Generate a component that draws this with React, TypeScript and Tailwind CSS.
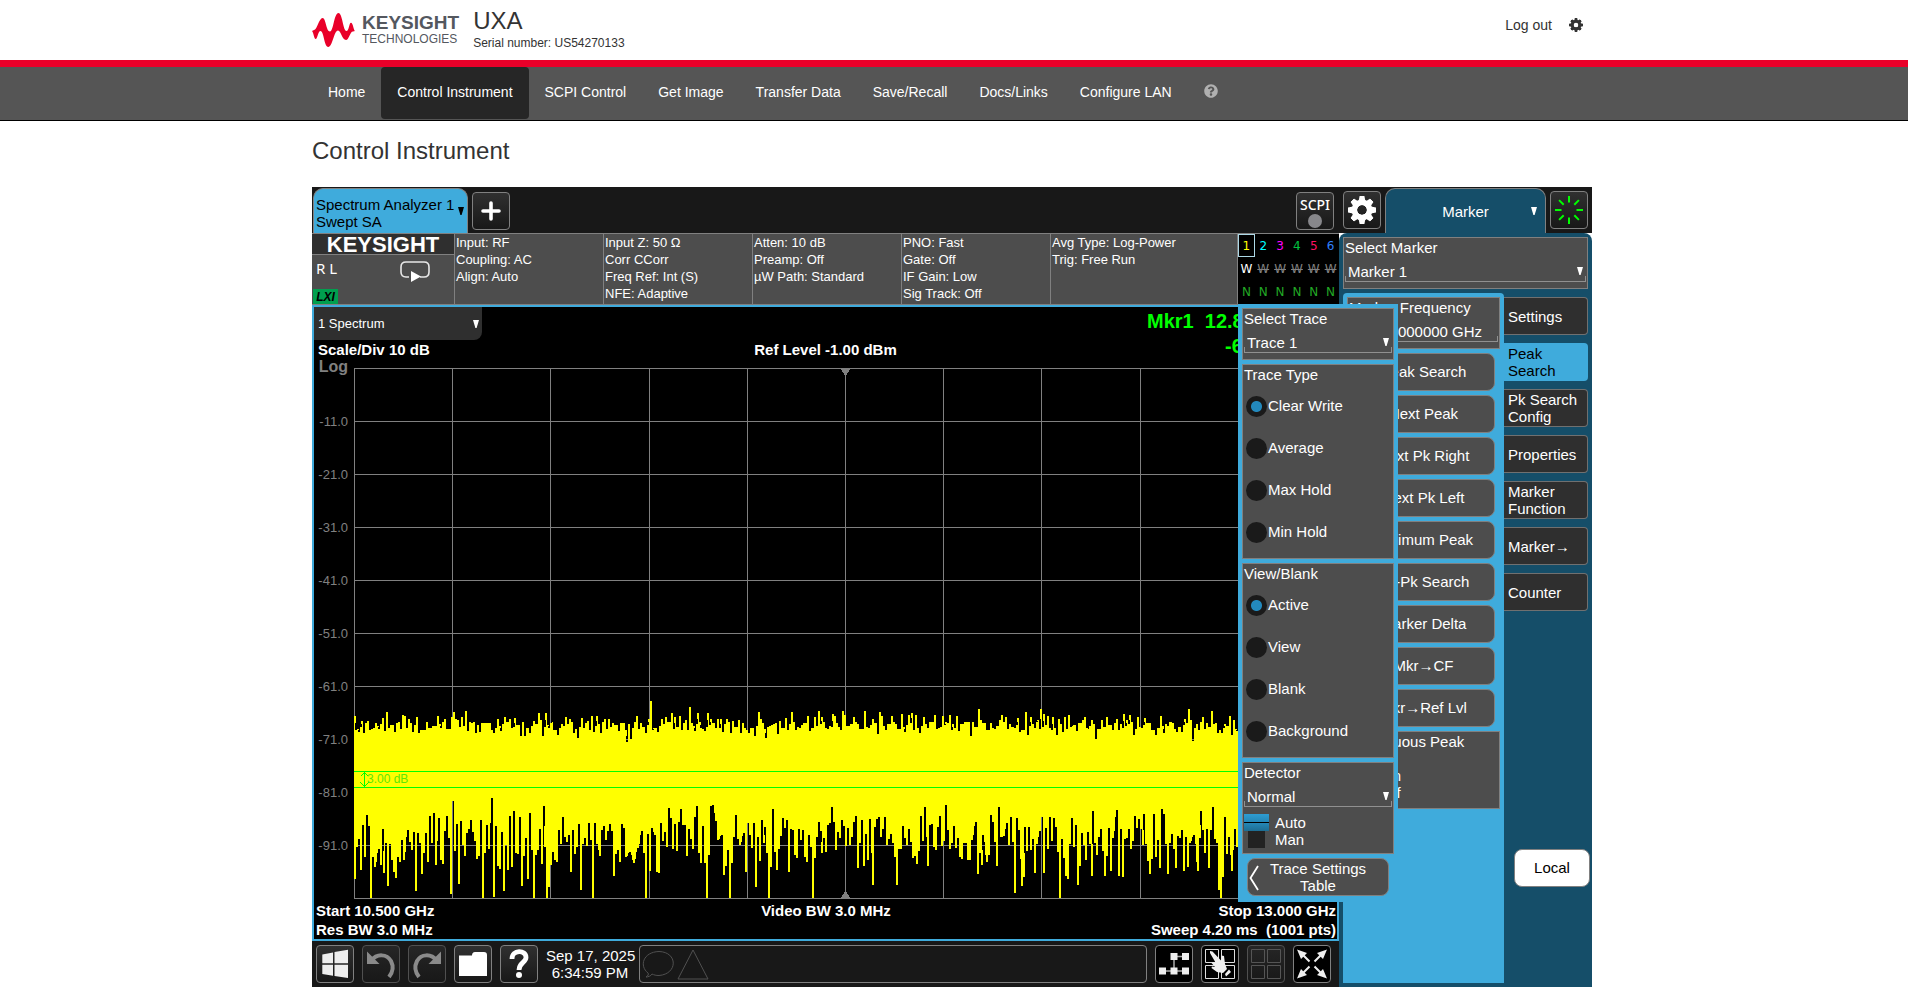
import React from "react";
import { FaQuestionCircle } from "react-icons/fa";

/* ------------------------------------------------------------------ */
/* Icons                                                               */
/* ------------------------------------------------------------------ */

function Gear({ className }: { className: string }) {
  return (
    <svg viewBox="0 0 28 28" className={className} fill="currentColor" aria-hidden="true">
      {[0, 45, 90, 135].map((a) => (
        <path key={a} d="M11.6 0h4.8l1 5v18l-1 5h-4.8l-1-5V17h6.8V11h-6.8V5z" transform={`rotate(${a} 14 14)`} clipPath="url(#gear-hole)" />
      ))}
      <circle cx="14" cy="14" r="7.7" fill="none" stroke="currentColor" strokeWidth="5.4" />
      <defs>
        <clipPath id="gear-hole">
          <path clipRule="evenodd" d="M0 0h28v28H0zM14 9a5 5 0 1 0 0 10a5 5 0 1 0 0-10z" />
        </clipPath>
      </defs>
    </svg>
  );
}

function Box38({ children }: { children: React.ReactNode }) {
  return (
    <svg viewBox="0 0 38 38" className="-m-px size-[38px]" aria-hidden="true">
      {children}
    </svg>
  );
}

const panes = ["M4.5 4.5h13v13h-13z", "M20.5 4.5h13v13h-13z", "M4.5 20.5h13v13h-13z", "M20.5 20.5h13v13h-13z"].join("");

const tool =
  "block size-[38px] shrink-0 overflow-hidden rounded border border-[#808080] bg-linear-to-b from-[#303030] to-[#181818]";
const toolDim =
  "block size-[38px] shrink-0 overflow-hidden rounded border border-[#505050] bg-linear-to-b from-[#262626] to-[#181818]";
const toolBlack = "block size-[38px] shrink-0 overflow-hidden rounded border border-[#808080] bg-black";

/* ------------------------------------------------------------------ */
/* Trace data: [x, y] in thirds of a pixel, two halves of the sweep    */
/* ------------------------------------------------------------------ */

type P = [number, number];

const topA: P[] = [[150,168],[153,210],[162,216],[171,183],[177,220],[188,183],[200,206],[212,190],[222,206],[234,174],[240,212],[246,157],[252,204],[270,215],[282,186],[288,206],[294,165],[300,168],[306,204],[312,178],[318,190],[324,215],[335,171],[342,218],[366,186],[378,204],[399,168],[408,204],[420,178],[440,171],[446,157],[452,177],[460,180],[466,201],[472,171],[483,153],[489,212],[500,190],[508,186],[514,218],[526,215],[554,190],[566,218],[580,178],[588,214],[600,171],[614,178],[622,204],[630,174],[648,227],[654,186],[660,227],[676,218],[686,183],[702,160],[708,180],[714,227],[723,160],[732,204],[742,186],[758,224],[770,192],[783,171],[795,178],[808,220],[819,233],[831,174],[837,204],[848,183],[860,168],[866,216],[875,168],[888,218],[900,178],[913,177],[924,190],[942,212],[956,190],[966,245],[972,192],[978,238],[984,204],[996,168],[1008,190],[1022,220],[1032,178],[1038,124],[1048,204],[1060,216],[1070,178],[1082,171],[1101,160],[1110,171],[1125,169],[1131,210],[1143,180],[1154,142],[1160,190],[1170,212],[1179,160],[1188,204],[1200,214],[1209,160],[1218,178],[1232,204],[1240,178]];
const topB: P[] = [[3,177],[9,216],[21,178],[33,218],[39,183],[57,180],[63,220],[75,204],[87,220],[105,227],[117,157],[123,178],[130,190],[138,234],[150,198],[163,192],[174,221],[180,183],[198,174],[204,209],[216,157],[222,186],[228,210],[240,204],[252,190],[264,168],[270,212],[284,171],[297,154],[306,171],[318,204],[330,198],[339,162],[345,168],[357,200],[369,154],[375,164],[387,198],[402,171],[414,192],[435,154],[447,204],[459,177],[474,221],[480,157],[486,168],[498,210],[516,168],[528,192],[546,163],[556,215],[567,166],[575,160],[588,166],[600,218],[612,171],[624,204],[645,166],[657,204],[670,168],[678,186],[690,164],[700,192],[710,168],[717,212],[735,186],[753,228],[759,186],[776,148],[784,180],[800,210],[814,190],[824,206],[840,180],[846,166],[858,171],[870,192],[886,204],[894,174],[900,215],[918,157],[924,224],[933,171],[945,204],[954,180],[963,148],[972,162],[984,168],[990,204],[999,171],[1011,224],[1017,178],[1030,216],[1036,171],[1047,166],[1056,198],[1070,212],[1090,180],[1096,171],[1104,206],[1116,180],[1128,238],[1134,206],[1146,180],[1160,171],[1178,209],[1190,178],[1202,192],[1212,163],[1222,180],[1230,166],[1242,224],[1254,171],[1266,204],[1274,174],[1290,190],[1308,224],[1322,168],[1332,220],[1344,198],[1360,190],[1372,215],[1386,216],[1396,178],[1407,148],[1413,180],[1419,243],[1425,204],[1437,210],[1450,171],[1462,190],[1475,154],[1482,192],[1494,218],[1506,220],[1514,192],[1530,168],[1536,224],[1542,180],[1550,212]];
const lowA: P[] = [[150,656],[156,560],[162,537],[168,629],[174,495],[180,590],[186,465],[192,498],[198,715],[204,590],[210,620],[222,568],[228,614],[233,507],[237,638],[243,549],[249,677],[255,552],[261,600],[267,636],[273,653],[279,590],[285,605],[291,540],[297,599],[309,510],[315,546],[321,569],[327,516],[333,692],[339,519],[345,549],[351,641],[357,578],[363,519],[369,605],[375,468],[381,549],[387,459],[393,614],[402,474],[408,600],[414,611],[420,513],[426,468],[432,534],[438,701],[445,423],[450,572],[456,492],[462,671],[468,483],[474,555],[480,587],[486,519],[492,507],[498,480],[504,516],[510,543],[516,596],[522,587],[528,480],[534,715],[540,578],[546,495],[552,566],[561,414],[567,710],[573,498],[579,617],[585,626],[591,516],[597,692],[603,555],[609,629],[615,468],[621,620],[627,453],[633,578],[639,581],[645,471],[651,677],[657,587],[663,534],[669,656],[675,459],[681,569],[687,715],[693,584],[699,569],[705,507],[711,611],[716,438],[720,560],[726,715],[732,680],[738,614],[744,575],[750,600],[756,605],[762,510],[768,552],[774,471],[780,531],[786,546],[792,525],[797,635],[804,510],[810,581],[816,560],[822,492],[828,689],[834,551],[840,534],[846,558],[852,489],[858,541],[864,715],[870,489],[876,551],[885,587],[891,510],[897,498],[903,541],[909,513],[915,492],[921,513],[927,647],[933,581],[939,569],[945,605],[951,492],[957,504],[963,590],[975,575],[987,608],[999,564],[1011,513],[1017,578],[1023,715],[1029,522],[1035,632],[1041,504],[1050,525],[1056,636],[1062,638],[1068,489],[1074,543],[1080,516],[1085,560],[1091,444],[1098,474],[1104,566],[1110,492],[1116,573],[1122,486],[1128,447],[1134,495],[1140,495],[1146,587],[1152,507],[1158,537],[1164,566],[1170,471],[1175,438],[1181,578],[1187,608],[1194,498],[1200,608],[1206,715],[1212,584],[1218,437],[1224,435],[1232,483],[1240,541]];
const lowB: P[] = [[6,525],[12,644],[18,617],[24,570],[30,715],[36,608],[42,531],[48,465],[54,537],[60,555],[72,519],[78,635],[84,489],[90,525],[96,564],[102,489],[108,680],[114,531],[120,602],[126,480],[132,549],[135,501],[141,578],[147,715],[153,620],[159,447],[165,575],[171,629],[177,566],[183,528],[189,474],[195,504],[201,480],[207,635],[213,507],[219,510],[225,584],[231,594],[237,507],[243,540],[249,510],[255,590],[261,605],[267,525],[273,560],[279,715],[285,594],[291,531],[297,487],[303,513],[306,578],[312,534],[318,575],[324,495],[330,489],[336,441],[342,486],[348,569],[354,516],[360,534],[366,480],[372,498],[378,557],[384,504],[390,555],[396,531],[402,486],[408,468],[414,624],[420,549],[426,480],[432,617],[438,522],[444,600],[450,477],[459,674],[465,501],[471,477],[477,471],[483,531],[489,507],[495,471],[501,555],[507,537],[513,522],[519,549],[525,590],[531,674],[537,566],[543,566],[549,498],[555,534],[561,555],[567,507],[573,546],[579,594],[585,587],[591,611],[597,572],[603,468],[609,543],[615,441],[624,617],[630,495],[636,492],[642,560],[648,569],[654,501],[660,468],[666,557],[672,543],[678,435],[684,510],[690,566],[696,549],[702,498],[708,563],[714,534],[720,590],[726,596],[732,549],[738,549],[744,600],[750,600],[756,540],[768,486],[774,641],[780,578],[785,614],[789,525],[801,605],[807,584],[813,465],[819,486],[825,546],[831,617],[837,441],[843,531],[852,528],[861,489],[867,555],[873,471],[879,546],[885,698],[891,474],[897,510],[905,677],[911,650],[915,501],[921,572],[927,501],[933,569],[939,537],[945,638],[951,551],[960,513],[966,471],[972,638],[978,504],[984,566],[990,471],[996,542],[1002,474],[1008,501],[1014,575],[1020,715],[1026,537],[1032,594],[1038,647],[1044,656],[1050,551],[1055,474],[1062,560],[1068,495],[1074,674],[1080,617],[1086,519],[1092,555],[1098,600],[1104,516],[1110,551],[1115,647],[1118,453],[1125,549],[1131,584],[1137,531],[1143,507],[1149,572],[1155,647],[1161,587],[1167,504],[1173,632],[1179,534],[1191,450],[1197,647],[1203,507],[1209,650],[1215,537],[1221,534],[1227,507],[1233,566],[1239,543],[1245,468],[1251,504],[1257,477],[1263,507],[1269,555],[1273,462],[1278,551],[1284,602],[1289,641],[1296,596],[1302,462],[1308,590],[1314,541],[1320,623],[1326,447],[1332,462],[1338,551],[1344,641],[1350,549],[1356,522],[1362,566],[1368,623],[1374,528],[1380,534],[1386,510],[1392,632],[1398,531],[1404,620],[1410,549],[1422,525],[1434,632],[1440,534],[1444,453],[1450,510],[1456,578],[1461,507],[1467,623],[1473,510],[1479,441],[1485,537],[1491,549],[1497,690],[1503,715],[1509,650],[1515,471],[1521,581],[1527,531],[1536,632],[1545,507],[1551,560]];

const join = (a: P[], b: P[]): P[] => [
  ...a.map(([x, y]): P => [Math.round(x / 3 - 49), Math.round(y / 3 + 292)]),
  ...b.map(([x, y]): P => [Math.round(x / 3 + 366), Math.round(y / 3 + 292)]),
];

function step(points: P[]) {
  return points
    .map(([x, y], i) => {
      const next = points[i + 1];
      const end = next ? Math.max(x + 1, next[0] - 1) : x + 3;
      return `L${x - 1} ${y}L${end} ${y}`;
    })
    .join("");
}

function tracePath() {
  const top = join(topA, topB);
  // Break wide plateaus into the small ripple of the noise floor.
  const upper: P[] = [];
  top.forEach((p, i) => {
    upper.push(p);
    const next = top[i + 1];
    if (next && next[0] - p[0] > 2) {
      upper.push([p[0] + 2, 354 + ((i * 7) % 9)]);
    }
  });
  const lower = join(lowA, lowB).reverse();
  const down = lower.map(([x, y]) => `L${x + 1} ${y}L${x - 1} ${y}`).join("");
  return `M0 400${step(upper)}L920 400${down}L0 500Z`;
}

const trace = tracePath();
const gridX = [0, 98, 196, 295, 393, 491, 589, 687, 786, 884, 982];
const gridY = [0, 53, 106, 159, 212, 265, 318, 371, 424, 477, 530];

/* ------------------------------------------------------------------ */
/* Small parts                                                         */
/* ------------------------------------------------------------------ */

function Caret({ className = "" }: { className?: string }) {
  return (
    <svg viewBox="0 0 6 8" className={`pointer-events-none h-2 w-1.5 fill-current ${className}`} aria-hidden="true">
      <path d="M0 0h6L3.6 8H2.4z" />
    </svg>
  );
}

function Bracket() {
  return <span className="pointer-events-none absolute inset-x-0 bottom-0 h-1.5 border-x border-b border-[#909090]" />;
}

function SelectField({ label, value }: { label: string; value: string }) {
  return (
    <label className="block px-px">
      <span className="block leading-[19px]">{label}</span>
      <span className="relative mt-1 block h-[21px]">
        <select className="h-[21px] w-full appearance-none bg-transparent pb-1 pl-[3px] leading-[17px] outline-none" defaultValue={value}>
          <option>{value}</option>
        </select>
        <Caret className="absolute top-1.5 right-[3px]" />
        <Bracket />
      </span>
    </label>
  );
}

function RadioPanel({ title, name, options }: { title: string; name: string; options: string[] }) {
  return (
    <fieldset className="h-[195px] border border-[#808080] bg-[#4d4d4d]">
      <div className="pl-px leading-5">{title}</div>
      {options.map((o, i) => (
        <label key={o} className="flex h-[42px] items-center gap-px pl-[3px]">
          <input
            type="radio"
            name={name}
            defaultChecked={i === 0}
            className="size-[21px] appearance-none rounded-full bg-[#1a1a1a] checked:bg-[radial-gradient(circle,#2389bd_0_5px,#1a1a1a_6px)]"
          />
          {o}
        </label>
      ))}
    </fieldset>
  );
}

const nav = ["Home", "Control Instrument", "SCPI Control", "Get Image", "Transfer Data", "Save/Recall", "Docs/Links", "Configure LAN"];

const settings = [
  ["Input: RF", "Coupling: AC", "Align: Auto"],
  ["Input Z: 50 Ω", "Corr CCorr", "Freq Ref: Int (S)", "NFE: Adaptive"],
  ["Atten: 10 dB", "Preamp: Off", "µW Path: Standard"],
  ["PNO: Fast", "Gate: Off", "IF Gain: Low", "Sig Track: Off"],
];

const traceColors = [
  "text-[#ffff00] outline outline-1 -outline-offset-1 outline-[#add8e6]",
  "text-[#00ffff]",
  "text-[#ff00ff]",
  "text-[#00c040]",
  "text-[#ff1060]",
  "text-[#3080ff]",
];

const peakButtons = ["Peak Search", "Next Peak", "Next Pk Right", "Next Pk Left", "Minimum Peak", "Pk-Pk Search", "Marker Delta", "Mkr→CF", "Mkr→Ref Lvl"];
const sideTabs = ["Settings", "Peak Search", "Pk Search Config", "Properties", "Marker Function", "Marker→", "Counter"];

/* ------------------------------------------------------------------ */
/* Page sections                                                       */
/* ------------------------------------------------------------------ */

function SiteHeader() {
  return (
    <header>
      <div className="mx-auto flex h-[60px] max-w-[1284px] items-start text-[#333]">
        <a href="#home" className="flex pt-[13px]" aria-label="Keysight Technologies">
          <svg viewBox="0 0 43 34" className="h-[34px] w-[43px]" fill="#e90029" aria-hidden="true">
            <path d="M0 18L2 17C5 17 7 5 10.6 5C14 5 14 18.5 18 18.5C21.5 18.5 22 0 26.5 0C30.5 0 31 18 34.5 18C37 18 37 9.7 39 9.7C41 9.7 41.5 17 43 18L41 18.5C38 18.5 37 27 34 27C30 27 29 17.5 26 17.5C22 17.5 20.5 34 16.3 34C12 34 12 18 8.5 18C6 18 5.5 26 3.7 26C2 26 1.5 19 0 18Z" />
          </svg>
          <span className="ml-[7px] block text-[#54585f]">
            <span className="block text-[19px] leading-5 font-bold">KEYSIGHT</span>
            <span className="block text-xs leading-3">TECHNOLOGIES</span>
          </span>
        </a>
        <div className="ml-[14px] pt-1.5">
          <div className="text-2xl leading-[29px]">UXA</div>
          <div className="text-xs leading-[17px]">Serial number: US54270133</div>
        </div>
        <div className="mr-[13px] ml-auto flex items-center gap-[17px] pt-[15px] text-sm">
          <a href="#logout">Log out</a>
          <button type="button" aria-label="Preferences">
            <Gear className="size-3.5" />
          </button>
        </div>
      </div>
      <div className="h-[7px] bg-[#e90029]" />
      <nav className="border-b border-black bg-[#555]">
        <div className="mx-auto flex h-[53px] max-w-[1284px] items-start text-sm text-white">
          {nav.map((n) => (
            <a
              key={n}
              href={`#${n}`}
              className={n === "Control Instrument" ? "rounded bg-[#262626] px-4 pt-[15px] pb-[17px]" : "px-4 pt-[15px] pb-[17px]"}
            >
              {n}
            </a>
          ))}
          <a href="#help" aria-label="Help" className="px-4 pt-[17px]">
            <FaQuestionCircle className="size-3.5 text-[#b0b0b0]" />
          </a>
        </div>
      </nav>
    </header>
  );
}

function TopBar() {
  return (
    <div className="flex h-[46px] items-start pr-[5px] pl-px">
      <button
        type="button"
        className="mt-px flex h-[45px] w-[155px] items-center justify-between rounded-t-[10px] border border-b-0 border-[#808080] bg-[#3fabdc] pr-[3px] pl-[2px] text-left leading-[17px] text-black"
      >
        <span className="mt-1">
          Spectrum Analyzer 1<br />
          Swept SA
        </span>
        <Caret />
      </button>
      <button type="button" className={`${tool} mt-[5px] ml-1`} aria-label="Add screen">
        <Box38>
          <path d="M11 19h16M19 11v16" stroke="#fff" strokeWidth="3.6" strokeLinecap="round" />
        </Box38>
      </button>
      <button type="button" className={`${tool} mt-[5px] ml-auto text-center text-white`}>
        <span className="block pt-[2px] font-['Noto_Sans'] text-sm leading-4 font-medium">SCPI</span>
        <span className="mx-auto mt-px block size-3.5 rounded-full bg-[#87878b]" />
      </button>
    </div>
  );
}

function InfoBar() {
  return (
    <div className="flex h-[72px] border-y border-[#808080] bg-[#4d4d4d] text-[13px] leading-[17px]">
      <div className="flex w-[142px] shrink-0 flex-col">
        <div className="h-[21px] border-b border-[#808080] bg-[#2f2f2f] text-center text-[22px] leading-[22px] font-bold">KEYSIGHT</div>
        <div className="flex items-start justify-between pt-[3px] pr-6 pl-1">
          <span className="font-['Noto_Sans'] text-[15px] leading-5">R L</span>
          <svg viewBox="0 0 30 22" className="mt-[3px] h-[22px] w-[30px]" fill="none" aria-hidden="true">
            <path d="M9 16H6Q1 16 1 11V6Q1 1 6 1H24Q29 1 29 6V11Q29 16 24 16H20" stroke="#e8e8e8" strokeWidth="1.6" />
            <path d="M11 10L21 15.500L11 21Z" fill="#fff" />
          </svg>
        </div>
        <div className="mt-auto ml-px h-[15px] w-[25px] bg-[#009f4f] text-center text-xs leading-4 font-bold text-black italic">LXI</div>
      </div>
      {settings.map((col) => (
        <div key={col[0]} className="w-[149px] shrink-0 border-l border-[#808080] pl-px whitespace-nowrap">
          {col.map((t) => (
            <div key={t}>{t}</div>
          ))}
        </div>
      ))}
      <div className="min-w-0 flex-1 border-x border-[#808080] pl-px">
        <div>Avg Type: Log-Power</div>
        <div>Trig: Free Run</div>
      </div>
      <div className="grid h-[70px] w-[101px] shrink-0 grid-cols-6 grid-rows-3 bg-black text-center font-['DejaVu_Sans'] text-xs">
        {traceColors.map((c, i) => (
          <button type="button" key={c} className={c}>
            {i + 1}
          </button>
        ))}
        {traceColors.map((c, i) => (
          <span key={c} className={i === 0 ? "leading-6 text-white" : "leading-6 text-[#808080] line-through"}>
            W
          </span>
        ))}
        {traceColors.map((c) => (
          <span key={c} className="leading-[22px] text-[#22a825]">
            N
          </span>
        ))}
      </div>
    </div>
  );
}

function Spectrum() {
  return (
    <section className="h-[636px] border-2 border-[#3fabdc] bg-black">
      <div className="flex h-[61px] justify-between font-bold">
        <div className="w-[190px]">
          <button
            type="button"
            className="flex h-[33px] w-[168px] items-center justify-between rounded-br-lg bg-[#2f2f2f] pr-[3px] pl-1 text-[13px] font-normal"
          >
            1 Spectrum
            <Caret />
          </button>
          <div className="pt-px pl-1 leading-[17px]">Scale/Div 10 dB</div>
        </div>
        <div className="pt-[34px] leading-[17px]">Ref Level -1.00 dBm</div>
        <div className="w-[190px] pt-[2px] text-xl leading-[25px] whitespace-pre text-[#00ff00]">
          <div>{"Mkr1  12.8"}</div>
          <div className="pl-[78px]">-6</div>
        </div>
      </div>
      <div className="flex">
        <div className="-mt-[10px] w-[34px] shrink-0 text-right text-[13px] text-[#808080]">
          <div className="h-[37px] text-base leading-[17px] font-bold">Log</div>
          {[-11, -21, -31, -41, -51, -61, -71, -81, -91].map((v) => (
            <div key={v} className="h-[53px] leading-[53px]">
              {v.toFixed(1)}
            </div>
          ))}
        </div>
        <div className="relative ml-1.5 h-[531px] min-w-0 flex-1">
          <svg viewBox="0 0 983 531" preserveAspectRatio="none" className="block h-full w-full" shapeRendering="crispEdges" aria-label="Spectrum trace">
            <g fill="#808080">
              {gridX.map((x) => (
                <rect key={x} x={x} y="0" width="1" height="531" />
              ))}
              {gridY.map((y) => (
                <rect key={y} x="0" y={y} width="983" height="1" />
              ))}
              <path d="M487 1h9l-4 7h-1zM487 530h9l-4 -7h-1z" />
            </g>
            <path d={trace} fill="#ffff00" />
            <g fill="#00ff00">
              <rect x="0" y="403" width="983" height="1" />
              <rect x="0" y="419" width="983" height="1" />
            </g>
            <path d="M10.5 404v15M6.500 408.500l4 -4l4 4M6.500 414.500l4 4l4 -4" fill="none" stroke="#00ff00" />
          </svg>
          <span className="absolute top-[403px] left-[13px] text-xs leading-[17px] text-[#60e800]">3.00 dB</span>
        </div>
      </div>
      <div className="grid grid-cols-3 pt-[2px] pr-px pl-[2px] leading-[19px] font-bold">
        <div>
          Start 10.500 GHz
          <br />
          Res BW 3.0 MHz
        </div>
        <div className="text-center">Video BW 3.0 MHz</div>
        <div className="text-right whitespace-pre">
          Stop 13.000 GHz
          <br />
          {"Sweep 4.20 ms  (1001 pts)"}
        </div>
      </div>
    </section>
  );
}

function BottomBar() {
  return (
    <div className="flex h-[46px] items-start gap-2 pt-1 pr-2 pl-1">
      <button type="button" className={tool} aria-label="Windows">
        <Box38>
          <path d="M6.300 9.500L17 7.500V18.300H6.300zM18.500 7L32 4.800V18.300H18.500zM6.300 19.700H17V30.700L6.300 29zM18.500 19.700H32V33L18.500 31z" fill="#eee" />
        </Box38>
      </button>
      <button type="button" className={toolDim} aria-label="Undo">
        <Box38>
          <path d="M9 16C15 8 25 9 29 16C32 22 31 27 27 32" fill="none" stroke="#8a8a8a" strokeWidth="4" />
          <path d="M5 6.500V19H17.500z" fill="#8a8a8a" />
        </Box38>
      </button>
      <button type="button" className={toolDim} aria-label="Redo">
        <Box38>
          <path d="M29 16C23 8 13 9 9 16C6 22 7 27 11 32" fill="none" stroke="#8a8a8a" strokeWidth="4" />
          <path d="M33 6.500V19H20.500z" fill="#8a8a8a" />
        </Box38>
      </button>
      <button type="button" className={tool} aria-label="File">
        <Box38>
          <path d="M5 10.500H18Q18 7 21 7H30Q33 7 33 10V31H5z" fill="#fff" />
        </Box38>
      </button>
      <button type="button" className={tool} aria-label="Help">
        <Box38>
          <path d="M12 14C12 4.500 26 4.500 26 12.500C26 17.500 19 17.500 19 25" fill="none" stroke="#fff" strokeWidth="4.800" />
          <circle cx="19" cy="30" r="3" fill="#fff" />
        </Box38>
      </button>
      <div className="w-[88px] pt-[2px] text-center leading-[17px] whitespace-nowrap">
        Sep 17, 2025
        <br />
        6:34:59 PM
      </div>
      <div className="-ml-[3px] h-[38px] min-w-0 flex-1 rounded border border-[#808080]">
        <svg viewBox="0 0 72 36" className="h-9 w-[72px]" fill="none" stroke="#505050" aria-hidden="true">
          <path d="M8 27C-1 20 3 6 19 5.500C38 6 38 28 19 29.500C16 29.500 14 29 12 28C11 30 8 31 6 31C8 30 9 28 8 27zM53 4L68 33H38z" />
        </svg>
      </div>
      <button type="button" className={toolBlack} aria-label="Sequencer">
        <Box38>
          <path d="M19 11.500H30M19 11.500V26M8 26H30" stroke="#aaa" strokeWidth="1.500" fill="none" />
          <path d="M15.500 8h7v7h-7zM27 8h7v7h-7zM4 22.500h7v7h-7zM15.500 22.500h7v7h-7zM27 22.500h7v7h-7z" fill="#eee" />
        </Box38>
      </button>
      <button type="button" className={toolBlack} aria-label="Touch">
        <Box38>
          <path d={panes} fill="none" stroke="#ddd" />
          <path d="M9 6L11.500 6.500L20 15.500L20.500 10.500L23 11L24 19L26 24L22 28L16 27L10.500 23L11 21.500L14 22L10.500 18L12 17L14.500 17.500L9 8zM24 29L28 24.500L30 27L25 31.500z" fill="#eee" />
        </Box38>
      </button>
      <button type="button" className={toolDim} aria-label="Multi-screen">
        <Box38>
          <path d={panes} fill="none" stroke="#555" />
        </Box38>
      </button>
      <button type="button" className={toolBlack} aria-label="Full screen">
        <Box38>
          <path d="M16.500 16.500L7 7M21.500 16.500L31 7M16.500 21.500L7 31M21.500 21.500L31 31" stroke="#eee" strokeWidth="2" />
          <path d="M4 4.500L14 8L8 14zM34 4.500L24 8L30 14zM4 33.500L14 30L8 24zM34 33.500L24 30L30 24z" fill="#eee" />
        </Box38>
      </button>
    </div>
  );
}

function TraceMenu() {
  return (
    <div className="absolute top-[117px] right-[194px] flex h-[598px] w-[160px] flex-col gap-1 bg-[#3fabdc] p-1">
      <div className="h-[52px] w-[152px] border border-[#808080] bg-[#4d4d4d]">
        <SelectField label="Select Trace" value="Trace 1" />
      </div>
      <RadioPanel title="Trace Type" name="type" options={["Clear Write", "Average", "Max Hold", "Min Hold"]} />
      <RadioPanel title="View/Blank" name="view" options={["Active", "View", "Blank", "Background"]} />
      <fieldset className="h-[92px] border border-[#808080] bg-[#4d4d4d]">
        <SelectField label="Detector" value="Normal" />
        <label className="mt-[7px] flex h-[17px] items-center gap-1.5 pl-px leading-[17px]">
          <input
            type="radio"
            name="detector"
            defaultChecked
            className="h-[17px] w-[25px] appearance-none bg-[linear-gradient(#2e9dd2_0,#2587b6_8px,#000_8px,#000_9px,#2587b6_9px,#1d6d92)]"
          />
          Auto
        </label>
        <label className="flex h-[17px] items-center gap-2.5 pl-[5px] leading-[17px]">
          <input type="radio" name="detector" className="size-[17px] appearance-none bg-[#222]" />
          Man
        </label>
      </fieldset>
      <button
        type="button"
        className="relative mx-auto h-[38px] w-[142px] rounded-lg border border-[#808080] bg-[#4d4d4d] text-center leading-[17px]"
      >
        <svg viewBox="0 0 10 26" className="absolute top-1.5 left-px h-[26px] w-2.5" fill="none" stroke="#fff" strokeWidth="1.800" aria-hidden="true">
          <path d="M9 1L1.500 13L9 25" />
        </svg>
        Trace Settings
        <br />
        Table
      </button>
    </div>
  );
}

function MarkerColumn() {
  return (
    <aside className="flex w-[253px] shrink-0 flex-col">
      <div className="flex h-[46px] items-start gap-1 bg-[#181818] px-1">
        <button type="button" className={`${tool} mt-1 text-white`} aria-label="Settings">
          <Gear className="mx-auto size-7" />
        </button>
        <button
          type="button"
          className="relative mt-px h-[45px] flex-1 rounded-t-[10px] border border-b-0 border-[#808080] bg-[#154e69] pt-[2px] text-center"
        >
          Marker
          <Caret className="absolute top-[18px] right-2" />
        </button>
        <button type="button" className={`${tool} mt-1`} aria-label="Sweep status">
          <Box38>
            {[0, 45, 90, 135, 180, 225, 270, 315].map((a) => (
              <path key={a} d="M19 5v6.500" stroke="#00ff00" strokeWidth="2" transform={`rotate(${a} 19 19)`} />
            ))}
          </Box38>
        </button>
      </div>
      <div className="flex flex-1 flex-col rounded-t-lg bg-[#154e69] p-1">
        <div className="h-[52px] border border-[#808080] bg-[#4d4d4d]">
          <SelectField label="Select Marker" value="Marker 1" />
        </div>
        <div className="mt-1 flex flex-1">
          <div className="w-[161px] shrink-0 rounded-t bg-[#3fabdc] p-1">
            <label className="block h-[52px] border border-[#808080] bg-[#4d4d4d] px-px">
              <span className="block leading-[19px]">Marker Frequency</span>
              <span className="relative mt-1 block h-[21px]">
                <input className="h-[21px] w-full bg-transparent pb-1 pl-[3px] outline-none" defaultValue="12.810000000 GHz" />
                <Bracket />
              </span>
            </label>
            <div className="mt-1 flex flex-col items-center gap-1">
              {peakButtons.map((b) => (
                <button key={b} type="button" className="h-[38px] w-[142px] rounded-lg border border-[#808080] bg-[#4d4d4d]">
                  {b}
                </button>
              ))}
            </div>
            <fieldset className="mt-1 h-[78px] border border-[#808080] bg-[#4d4d4d] pl-[2px] leading-[17px]">
              <div className="pt-px">
                Continuous Peak
                <br />
                Search
              </div>
              <label className="flex h-[17px] items-center gap-2.5 pl-1">
                <input type="radio" name="continuous" className="size-[17px] appearance-none bg-[#222]" />
                On
              </label>
              <label className="flex h-[17px] items-center gap-1.5">
                <input type="radio" name="continuous" defaultChecked className="h-[17px] w-[25px] appearance-none bg-[#2389bd]" />
                Off
              </label>
            </fieldset>
          </div>
          <div className="flex min-w-0 flex-1 flex-col gap-2 pt-1">
            {sideTabs.map((t) => (
              <button
                key={t}
                type="button"
                className={
                  t === "Peak Search"
                    ? "h-[38px] rounded-r bg-[#3fabdc] pr-1 pl-1 text-left leading-[17px] text-black"
                    : "h-[38px] rounded-r border border-l-0 border-[#707070] bg-[#2f2f2f] pl-1 text-left leading-[17px]"
                }
              >
                {t === "Peak Search" ? (
                  <>
                    Peak
                    <br />
                    Search
                  </>
                ) : (
                  t
                )}
              </button>
            ))}
            <button
              type="button"
              className="-mr-[2px] mt-auto mb-24 ml-2.5 h-[38px] rounded-lg border border-[#808080] bg-white text-black"
            >
              Local
            </button>
          </div>
        </div>
      </div>
    </aside>
  );
}

export default function App() {
  return (
    <div className="min-h-screen bg-white pr-3 font-['Liberation_Sans',Arial,sans-serif]">
      <SiteHeader />
      <main className="mx-auto max-w-[1284px]">
        <h1 className="pt-[13px] pb-5 text-2xl leading-[33px] text-[#333]">Control Instrument</h1>
        <div className="relative flex max-w-[1280px] text-[15px] text-white">
          <div className="min-w-0 flex-1 bg-[#181818]">
            <TopBar />
            <InfoBar />
            <Spectrum />
            <BottomBar />
          </div>
          <MarkerColumn />
          <TraceMenu />
        </div>
      </main>
    </div>
  );
}
